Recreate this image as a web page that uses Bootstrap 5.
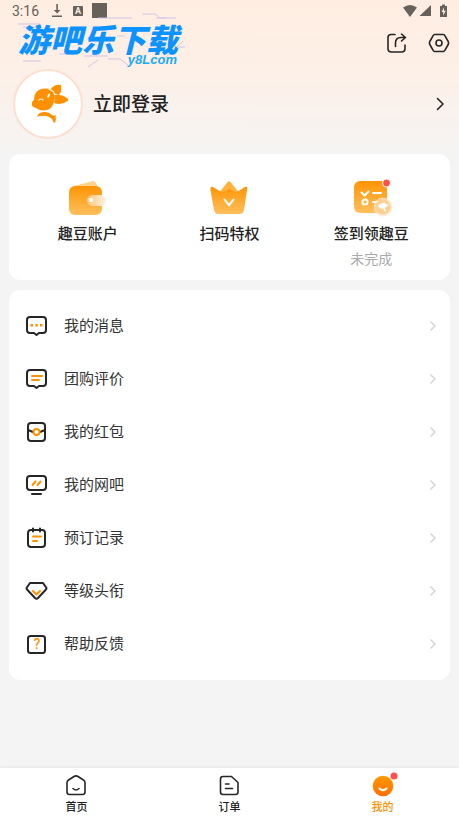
<!DOCTYPE html>
<html lang="zh-CN">
<head>
<meta charset="utf-8">
<meta name="viewport" content="width=device-width, initial-scale=1">
<title>我的</title>
<link href="https://cdn.jsdelivr.net/npm/bootstrap@5.3.0/dist/css/bootstrap.min.css" rel="stylesheet">
<style>
body{font-family:Roboto,"Noto Sans CJK SC",sans-serif;color:#222;background:#f4f4f4 linear-gradient(#ffede1 0,#fcf0e8 80px,#f4f4f4 160px) no-repeat}
svg{display:block;flex:none}
a{color:inherit;text-decoration:none}
.status{height:22px;padding:0 11px 0 12px;font-size:14px;color:#67615c}
.top-row{height:42px;padding:0 9px 0 18px}
.brand{width:166px;height:42px}
.brand-art{position:absolute;left:0;top:-10px}
.brand-name{padding-top:4px;font:italic 900 32px/30px "Liberation Sans","Noto Sans CJK SC",sans-serif;color:#0d93ff;white-space:nowrap}
.brand-site{margin-right:7px;font:italic 700 13px/8px "Liberation Sans",sans-serif;color:#22aaf5}
.profile{height:80px;padding:0 14px 0 13px}
.avatar{width:70px;height:70px;border:2px solid #fcdfcf;background:#fff}
.login{font-size:19px;font-weight:500;margin-left:10px;padding-top:2px}
.panel{margin:10px 9px 0;background:#fff;border-radius:11px}
.services{height:126px;padding:24px 8px 0}
.service-name{font-size:15px;line-height:22px;font-weight:500;margin-top:6px}
.service-note{font-size:14px;line-height:20px;color:#aaa;margin-top:4px}
.menu{padding:9px 13px 10px 16px}
.menu a{height:53px;font-size:15px;color:#333}
.menu span{margin-left:16px;padding-top:2px}
.tabs{height:50px;background:#fff;box-shadow:0 -1px 2px #e6e6e6;font-size:11px;line-height:16px;font-weight:500}
.tabs a{padding-top:6px}
.tabs span{margin-top:3px}
.tabs .current{color:#ff9000}
.ln{fill:none;stroke:#262626;stroke-width:2;stroke-linecap:round;stroke-linejoin:round}
.thin{stroke-width:1.6}
.or{fill:none;stroke:#ff9000;stroke-width:2;stroke-linecap:round;stroke-linejoin:round}
.wh{fill:none;stroke:#fff;stroke-width:2;stroke-linecap:round;stroke-linejoin:round}
.go{fill:none;stroke:#d2d2d2;stroke-width:1.4}
.glyph-a{font:700 9px Roboto,sans-serif;fill:#fdece1}
.glyph-q{font:500 14px Roboto,sans-serif;fill:#ff9000}
</style>
<script src="https://cdn.jsdelivr.net/npm/bootstrap@5.3.0/dist/js/bootstrap.bundle.min.js"></script>
</head>
<body class="d-flex flex-column min-vh-100">
<svg width="0" height="0" class="position-absolute" aria-hidden="true">
<defs>
<linearGradient id="amber" x1="0" y1="0" x2="0" y2="1"><stop stop-color="#ff9404"/><stop offset="1" stop-color="#ffc05c"/></linearGradient>
<linearGradient id="pale" x1="0" y1="0" x2="1" y2="0"><stop stop-color="#ffc470"/><stop offset="1" stop-color="#fff3e6"/></linearGradient>
<linearGradient id="face" x1="0" y1="0" x2="0" y2="1"><stop stop-color="#ff9a00"/><stop offset="1" stop-color="#ff6f00"/></linearGradient>
<symbol id="next" viewBox="0 0 8 12"><path class="go" d="M1.500 1.500 6 6l-4.500 4.500"/></symbol>
</defs>
</svg>
<div class="status d-flex align-items-center">
  <span>3:16</span>
  <svg class="ms-2 me-auto" width="62" height="16" fill="#67615c"><g transform="translate(3 0)"><path d="M6.300 1h1.600v6h2.600L7.100 10.500 3.700 7h2.600zM2 12.500h10V14H2z"/><rect x="23" y="3" width="10" height="10" rx="1"/><text class="glyph-a" x="28" y="11" text-anchor="middle">A</text><path d="M42 0h15v15H42z"/></g></svg>
  <svg width="45" height="14" fill="#67615c"><path d="M0 3.500Q7-1.500 14 3.500L7 13zM28 1v11H16.500zM37 2h2V.5h3V2h2v11h-7z"/><path fill="#fdece1" d="m41 3.500-2.500 4.500h1.700v3.500l2.600-4.700H41z"/></svg>
</div>
<header class="top-row d-flex align-items-center">
  <div class="brand position-relative me-auto">
    <svg class="brand-art" width="176" height="56" fill="none" stroke="#cfc5e8" stroke-width="1"><path d="M0 12h22M5 15h18M8 18h10M80 6h34M124 2h13l5 4h16M138 6h10M41 42h16M66 44h24M70 55l10-7M90 47h12l8 6M5 49h18M147 46l18-17M158 35h9M23 35h10M99 24h8"/></svg>
    <div class="brand-name position-relative">游吧乐下载</div>
    <div class="brand-site position-relative text-end">y8Lcom</div>
  </div>
  <button class="btn p-0 border-0" aria-label="分享"><svg width="22" height="22"><path class="ln thin" d="M9 2.500H5Q2 2.500 2 5.500v11q0 3.500 3.500 3.500h10q3.500 0 3.500-3.500V13M9.500 14.500V11q0-5.500 5.500-5.500h4M15.500 2l4 3.500-4 3.500"/></svg></button>
  <button class="btn p-0 border-0 ms-3" aria-label="设置"><svg class="ms-1" width="22" height="22"><path class="ln thin" d="M6.500 2.500h9Q16.300 2.500 17 3.800l3.200 5.700q.8 1.500 0 3L17 18.200q-.7 1.300-1.500 1.300h-9q-.8 0-1.500-1.300l-3.200-5.700q-.8-1.500 0-3L5 3.800Q5.700 2.500 6.500 2.500z"/><circle class="ln thin" cx="11" cy="11" r="3"/></svg></button>
</header>
<a class="profile d-flex align-items-center" href="#">
  <div class="avatar rounded-circle d-flex align-items-center justify-content-center">
    <svg width="40" height="42" fill="#ff9000"><path d="M6 17Q6 6 17 5.500q7-.5 9 5.500 1 3 0 7-1 7-7 9-7 1.500-11-2-5-1-4-5 0-2 2-3z"/><path d="M22 7q4-6 11-5 1 7-2 10-2-1-4-1-2-3-5-4zM26 12q9-1 15 5-7 6-15 3 1-4 0-8zM9 34q1-5 8-5 4 0 7 3 2 1 4 0-1 3 0 4l-1 4q-2-1-3-4-5-4-9-3-3-1-6 1z"/><path stroke="#fff" stroke-width="1.100" fill="none" stroke-linecap="round" d="M11 17q1.500-2 4 0M21 6.500q4 .500 6 5"/><path fill="#fff" d="M19 14q1-3 3-4 0 4-2 5z"/></svg>
  </div>
  <span class="login me-auto">立即登录</span>
  <svg width="9" height="14"><path class="ln thin" d="m1.500 1.500 5.500 5.500-5.500 5.500"/></svg>
</a>
<main class="flex-grow-1">
<section class="panel services row g-0 text-center">
  <a class="col" href="#"><svg class="mx-auto" width="42" height="39"><path fill="#ffd18a" d="m7 8 19-5q3 0 4 5z"/><rect x="2" y="8" width="33" height="29" rx="6" fill="url(#amber)"/><rect x="20" y="17" width="19" height="11" rx="5.500" fill="url(#pale)"/><circle cx="24" cy="22" r="2.300" fill="#fff"/></svg><div class="service-name">趣豆账户</div></a>
  <a class="col" href="#"><svg class="mx-auto" width="42" height="39"><path fill="#ffb23d" d="M9 16 18.500 4q1.500-1.500 3 0L31 16z"/><path fill="url(#amber)" d="M4 9 12 14q7-1 8-4 2 3 8 4l8-5q3-1 2 3l-3 20q-1 4-4 4H9q-3 0-4-4L1.500 12Q1 8 4 9z"/><path class="wh" d="m15.500 21.500 4.500 6 4.500-6M16 22l4 5 4-5"/></svg><div class="service-name">扫码特权</div></a>
  <a class="col" href="#"><svg class="mx-auto" width="44" height="39"><rect x="5" y="3" width="33" height="32" rx="6" fill="url(#amber)"/><path class="wh" d="m12.500 14.500 3 3 4-4M24 15h8M24 24h6"/><circle class="wh" cx="16" cy="24" r="2.600"/><circle cx="34" cy="29" r="9.500" fill="#ffe6cc" opacity=".75"/><circle cx="34" cy="29" r="7.500" fill="#ffcf92"/><path fill="#fff" d="m29 29 1-3 4-1 1-1 2 2 3 1-3 2-1 1 1 4-2-1-1-3-1 1z"/><circle cx="37.500" cy="5" r="4" fill="#ff5148" stroke="#fff"/></svg><div class="service-name">签到领趣豆</div><div class="service-note">未完成</div></a>
</section>
<nav class="panel menu">
  <a class="d-flex align-items-center" href="#"><svg width="23" height="22"><path class="ln" d="M5 2h13q3 0 3 3v10q0 3-3 3h-4l-2.500 2L9 18H5q-3 0-3-3V5q0-3 3-3z"/><path fill="#ff9000" d="M5.500 9h2.500v2.500H5.500zM10.300 9h2.500v2.500h-2.500zM15 9h2.500v2.500H15z"/></svg><span class="me-auto">我的消息</span><svg width="8" height="12"><use href="#next"/></svg></a>
  <a class="d-flex align-items-center" href="#"><svg width="23" height="22"><path class="ln" d="M5 2h13q3 0 3 3v10q0 3-3 3h-4l-2.500 2L9 18H5q-3 0-3-3V5q0-3 3-3z"/><path class="or" d="M7 8h10M7 12h7"/></svg><span class="me-auto">团购评价</span><svg width="8" height="12"><use href="#next"/></svg></a>
  <a class="d-flex align-items-center" href="#"><svg width="23" height="22"><rect class="ln" x="3" y="2" width="17" height="18" rx="3"/><path class="ln" d="m3 9 5 2M20 9l-5 2"/><circle class="or" cx="11.500" cy="11" r="3"/></svg><span class="me-auto">我的红包</span><svg width="8" height="12"><use href="#next"/></svg></a>
  <a class="d-flex align-items-center" href="#"><svg width="23" height="22"><rect class="ln" x="2" y="2" width="19" height="14" rx="3"/><path class="ln" d="M7 20h9"/><path class="or" d="m7.500 11 3-3.500M12.500 11l3-3.500"/></svg><span class="me-auto">我的网吧</span><svg width="8" height="12"><use href="#next"/></svg></a>
  <a class="d-flex align-items-center" href="#"><svg width="23" height="22"><rect class="ln" x="3" y="3" width="17" height="17" rx="3"/><path class="ln" d="M8 1.500v3M15 1.500v3"/><path class="or" d="M8 9.500h8M8 14h4"/></svg><span class="me-auto">预订记录</span><svg width="8" height="12"><use href="#next"/></svg></a>
  <a class="d-flex align-items-center" href="#"><svg width="23" height="22"><path class="ln" d="M5 3h13l3.500 5q0 1-1 2l-7.500 8q-1.500 1.500-3 0L2.500 10q-1-1-1-2z"/><path class="or" d="m8 11 3.500 3.500L15 11"/></svg><span class="me-auto">等级头衔</span><svg width="8" height="12"><use href="#next"/></svg></a>
  <a class="d-flex align-items-center" href="#"><svg width="23" height="22"><rect class="ln" x="3" y="3" width="17" height="17" rx="2.500"/><text class="glyph-q" x="12" y="16" text-anchor="middle">?</text></svg><span class="me-auto">帮助反馈</span><svg width="8" height="12"><use href="#next"/></svg></a>
</nav>
</main>
<footer class="tabs row g-0 text-center sticky-bottom">
  <a class="col d-flex flex-column align-items-center" href="#"><svg width="23" height="23"><path class="ln thin" d="M3.500 6 9 2.500q2-1.200 4 0L18.500 6q1.500 1 1.500 2.500V18q0 2.500-2.500 2.500h-13Q2 20.500 2 18V8.500Q2 7 3.500 6zM8 14.500q3 3 6 0"/></svg><span>首页</span></a>
  <a class="col d-flex flex-column align-items-center" href="#"><svg width="23" height="23"><path class="ln thin" d="M5 2.500h8.500L20 8.500V18q0 2.500-2.500 2.500H5Q2.500 20.500 2.500 18V5Q2.500 2.500 5 2.500zM7.500 10H11M7.500 14.500h7"/></svg><span>订单</span></a>
  <a class="col d-flex flex-column align-items-center current" href="#"><svg width="22" height="23" overflow="visible"><circle cx="11" cy="12" r="10.300" fill="url(#face)"/><path class="wh thin" d="M7.500 14.500q3.500 3.500 7 0"/><circle cx="22" cy="2" r="3.500" fill="#ff5148"/></svg><span>我的</span></a>
</footer>
</body>
</html>
